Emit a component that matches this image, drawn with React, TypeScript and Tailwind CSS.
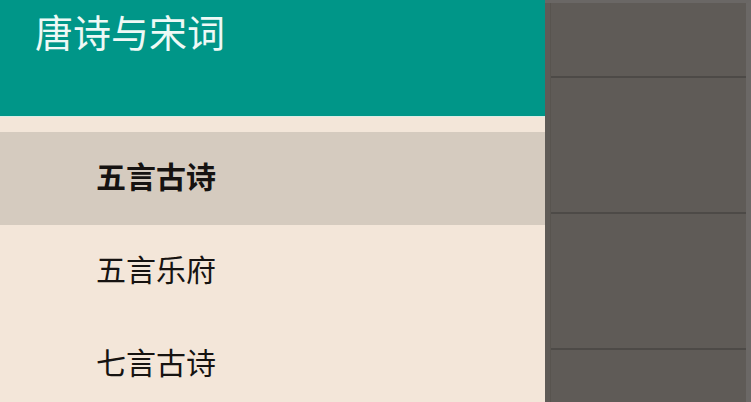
const items = ['五言古诗', '五言乐府', '七言古诗'];

export default function App() {
  return (
    <div
      className="flex h-[402px] w-[751px] overflow-hidden"
      style={{ fontFamily: '"Noto Sans CJK SC", "Noto Sans", sans-serif' }}
    >
      <aside className="flex w-[545px] shrink-0 flex-col bg-[#f3e6d9]">
        <header className="h-[116px] shrink-0 bg-[#009688] pl-[35px]">
          <div className="flex h-[62px] items-center text-[38px] leading-none text-[#eef9f6]">
            唐诗与宋词
          </div>
        </header>
        <div className="h-px shrink-0 bg-[#d9eee6]" />
        <div className="h-[15px] shrink-0" />
        <nav className="flex flex-col">
          {items.map((item, i) => (
            <div
              key={item}
              className={`flex h-[93px] shrink-0 items-center pb-[8px] pl-[96px] text-[30px] leading-none text-[#161311] ${
                i === 0 ? 'bg-[#d5cbbf] font-bold' : ''
              }`}
            >
              {item}
            </div>
          ))}
        </nav>
      </aside>

      <div className="flex flex-1 border-t-[3px] border-r-[5px] border-t-[#6a6765] border-r-[#6b6866] bg-[#5f5b57]">
        <div className="w-[6px] shrink-0 border-r border-[#58544f]" />
        <div className="flex flex-1 flex-col">
          <div className="h-[75px] shrink-0 border-b-2 border-[#4d4a47]" />
          <div className="h-[136px] shrink-0 border-b-2 border-[#4d4a47]" />
          <div className="h-[136px] shrink-0 border-b-2 border-[#4d4a47]" />
          <div className="flex-1" />
        </div>
      </div>
    </div>
  );
}
